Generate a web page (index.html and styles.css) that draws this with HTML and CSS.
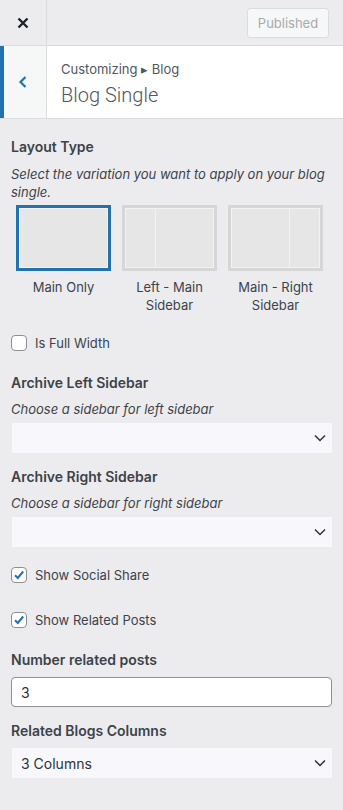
FILE: index.html
```html
<!DOCTYPE html>
<html>
<head>
<meta charset="utf-8">
<link rel="stylesheet" href="styles.css">
</head>
<body>
<div class="top">
  <div class="close">
    <svg width="14" height="14" viewBox="0 0 14 14"><path d="M2.5 2.5 L11.5 11.5 M11.5 2.5 L2.5 11.5" stroke="#1d2327" stroke-width="2.4" stroke-linecap="butt"/></svg>
  </div>
  <div class="publish">Published</div>
</div>
<div class="sechead">
  <div class="back">
    <svg width="12" height="14" viewBox="0 0 12 14"><path d="M8.5 2 L3.5 7 L8.5 12" fill="none" stroke="#2271b1" stroke-width="2.2"/></svg>
  </div>
  <div class="titles">
    <div class="crumb">Customizing ▸ Blog</div>
    <div class="title">Blog Single</div>
  </div>
</div>
<div class="content">
  <div class="ctl layout">
    <div class="label">Layout Type</div>
    <div class="desc">Select the variation you want to apply on your blog single.</div>
    <div class="layouts">
      <div class="opt">
        <div class="box sel"><div class="inner"><div class="pane grow"></div></div></div>
        <div class="cap">Main Only</div>
      </div>
      <div class="opt">
        <div class="box"><div class="inner"><div class="pane side"></div><div class="pane grow"></div></div></div>
        <div class="cap">Left - Main<br>Sidebar</div>
      </div>
      <div class="opt">
        <div class="box"><div class="inner"><div class="pane grow"></div><div class="pane side"></div></div></div>
        <div class="cap">Main - Right<br>Sidebar</div>
      </div>
    </div>
  </div>
  <label class="check first"><span class="cb"></span>Is Full Width</label>
  <div class="ctl">
    <div class="label">Archive Left Sidebar</div>
    <div class="desc">Choose a sidebar for left sidebar</div>
    <div class="select"><span></span><svg class="chev" width="12" height="8" viewBox="0 0 12 8"><path d="M1 1.5 L6 6.5 L11 1.5" fill="none" stroke="#2c3338" stroke-width="1.5"/></svg></div>
  </div>
  <div class="ctl">
    <div class="label">Archive Right Sidebar</div>
    <div class="desc">Choose a sidebar for right sidebar</div>
    <div class="select"><span></span><svg class="chev" width="12" height="8" viewBox="0 0 12 8"><path d="M1 1.5 L6 6.5 L11 1.5" fill="none" stroke="#2c3338" stroke-width="1.5"/></svg></div>
  </div>
  <label class="check c2"><span class="cb on"><svg width="14" height="14" viewBox="0 0 14 14"><path d="M3 7.2 L5.8 10 L11.2 3.5" fill="none" stroke="#2271b1" stroke-width="2"/></svg></span>Show Social Share</label>
  <label class="check c3"><span class="cb on"><svg width="14" height="14" viewBox="0 0 14 14"><path d="M3 7.2 L5.8 10 L11.2 3.5" fill="none" stroke="#2271b1" stroke-width="2"/></svg></span>Show Related Posts</label>
  <div class="ctl">
    <div class="label">Number related posts</div>
    <div class="input">3</div>
  </div>
  <div class="ctl">
    <div class="label">Related Blogs Columns</div>
    <div class="select"><span>3 Columns</span><svg class="chev" width="12" height="8" viewBox="0 0 12 8"><path d="M1 1.5 L6 6.5 L11 1.5" fill="none" stroke="#2c3338" stroke-width="1.5"/></svg></div>
  </div>
</div>
</body>
</html>
```
FILE: styles.css
```css
* { box-sizing: border-box; }
html, body { margin: 0; padding: 0; }
body {
  width: 343px;
  height: 810px;
  background: #ececee;
  font-family: "Inter", "Liberation Sans", sans-serif;
  color: #3c434a;
  font-size: 13px;
  overflow: hidden;
}
.top {
  height: 46px;
  display: flex;
  align-items: center;
  border-bottom: 1px solid #dcdcde;
  background: #ececee;
}
.close {
  width: 47px;
  height: 45px;
  border-right: 1px solid #dcdcde;
  display: flex;
  align-items: center;
  justify-content: center;
}
.publish {
  margin-left: auto;
  margin-right: 14px;
  width: 82px;
  height: 30px;
  border: 1px solid #dcdcde;
  border-radius: 3px;
  background: #f6f7f7;
  color: #a7aaad;
  font-size: 13px;
  display: flex;
  align-items: center;
  justify-content: center;
}
.sechead {
  display: flex;
  height: 73px;
  background: #fff;
  border-bottom: 1px solid #dcdcde;
}
.back {
  width: 47px;
  border-left: 4px solid #2271b1;
  border-right: 1px solid #dcdcde;
  background: #f6f7f7;
  display: flex;
  align-items: center;
  justify-content: center;
  padding-right: 4px;
}
.titles {
  padding: 14px 0 0 14px;
}
.crumb {
  font-size: 13px;
  color: #50575e;
  line-height: 18px;
}
.title {
  font-family: "Roboto", "Inter", sans-serif;
  font-size: 20px;
  font-weight: 300;
  color: #50575e;
  line-height: 28px;
  margin-top: 3px;
}
.content {
  padding: 19px 11px 0 11px;
}
.ctl { margin-bottom: 15px; }
.label {
  font-size: 14px;
  font-weight: 600;
  color: #3c434a;
  line-height: 18px;
  margin-bottom: 8px;
}
.layout .label { margin-bottom: 9px; }
.desc {
  font-size: 13px;
  font-style: italic;
  color: #3c434a;
  line-height: 18px;
  margin-bottom: 5px;
}
.layout .desc { margin-bottom: 4px; }
.layouts {
  display: grid;
  grid-template-columns: 95px 95px 95px;
  column-gap: 11px;
  padding-left: 5px;
}
.opt { text-align: center; }
.box {
  height: 66px;
  border: 3px solid #d6d6d6;
  background: #f2f2f2;
  padding: 1px;
}
.box.sel { border-color: #2271b1; }
.inner {
  display: flex;
  gap: 1px;
  height: 100%;
}
.pane { background: #e6e6e6; }
.pane.grow { flex: 1; }
.pane.side { width: 29px; }
.cap {
  font-size: 13px;
  line-height: 18px;
  color: #3c434a;
  margin-top: 7px;
}
.check {
  display: flex;
  align-items: center;
  font-size: 13px;
  color: #3c434a;
  line-height: 16px;
}
.check.first { margin-top: 21px; margin-bottom: 23px; }
.check.c2 { margin-top: 20px; margin-bottom: 29px; }
.check.c3 { margin-bottom: 23px; }
.cb {
  width: 16px;
  height: 16px;
  border: 1px solid #8c8f94;
  border-radius: 4px;
  background: #fff;
  margin-right: 8px;
  display: flex;
  align-items: center;
  justify-content: center;
}
.select {
  height: 30px;
  background: #f8f8fc;
  display: flex;
  align-items: center;
  justify-content: space-between;
  padding: 0 6px 0 9px;
  font-size: 14px;
  color: #2c3338;
  margin-left: 1px;
}
.input {
  height: 30px;
  border: 1px solid #8c8f94;
  border-radius: 4px;
  background: #fff;
  font-size: 14px;
  color: #2c3338;
  display: flex;
  align-items: center;
  padding-left: 9px;
}
```
